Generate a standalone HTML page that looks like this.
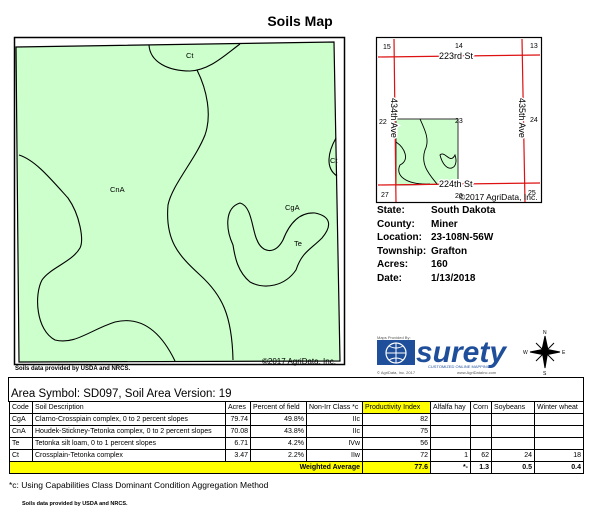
<!DOCTYPE html>
<html><head><meta charset="utf-8"><style>
body{margin:0;width:600px;height:513px;background:#fff;position:relative;font-family:"Liberation Sans",Arial,sans-serif;overflow:hidden}
.a{position:absolute;white-space:nowrap}
table{border-collapse:collapse;position:absolute;left:9px;top:401px;font-size:7px;font-family:"Liberation Sans",sans-serif;table-layout:fixed;width:574px}
td{border:1px solid #000;height:11px;padding:0 2px;line-height:11px;white-space:nowrap;overflow:hidden}
.r{text-align:right}
.y{background:#ffff00}
.i{font-weight:bold;font-size:10px}
</style></head><body>
<div class="a" style="left:0;width:600px;text-align:center;top:13px;font-size:14px;font-weight:bold">Soils Map</div>
<svg class="a" style="left:0;top:0" width="600" height="380">
<rect x="14.5" y="37.5" width="330" height="327" fill="#fff" stroke="#000" stroke-width="1.5"/>
<polygon points="16,47 334,42 340,361 19,362" fill="#ccffcc" stroke="#000" stroke-width="1.2"/>
<g fill="none" stroke="#000" stroke-width="1.1">
<path d="M149,45 C150,62 168,71 190,71 C210,70 225,55 240,44"/>
<path d="M197,70 C207,90 212,115 205,135 C195,160 172,185 168,205 C165,240 178,255 200,275 C222,295 232,315 233,360"/>
<path d="M19,155 C35,160 50,178 68,198 C80,215 84,240 80,248 C72,262 50,268 42,280 C34,295 36,330 55,340 C75,345 90,330 115,322 C140,316 160,330 175,361"/>
<path d="M336,138 C328,152 325,168 337,176"/>
<path d="M240,203 C252,206 252,230 257,240 C262,253 275,255 283,240 C290,222 300,212 315,213 C330,216 333,225 322,238 C310,250 302,252 296,270 C285,286 265,290 250,282 C238,272 235,258 233,245 C226,230 224,208 240,203 Z"/>
</g>
<g font-size="7.5" font-family="Liberation Sans,sans-serif">
<text x="186" y="58">Ct</text><text x="110" y="192">CnA</text><text x="285" y="210">CgA</text><text x="294" y="246">Te</text><text x="330" y="163">Ct</text>
<text x="262" y="364" font-size="8">©2017 AgriData, Inc.</text>
</g>
<rect x="376.5" y="37.5" width="165" height="165" fill="#fff" stroke="#000" stroke-width="1.2"/>
<polygon points="396,119 458,119 458,184 396,185" fill="#ccffcc" stroke="#333" stroke-width="1"/>
<g fill="none" stroke="#000" stroke-width="0.9">
<path d="M420,119 C425,130 430,140 425,150 C420,165 430,175 437,184"/>
<path d="M396,142 C405,148 410,160 400,165 C395,175 405,185 430,184"/>
<path d="M440,155 C445,150 450,165 455,155 C460,170 445,175 440,155Z"/>
</g>
<g stroke="#dd1111" stroke-width="1.2">
<line x1="378" y1="57" x2="540" y2="55"/><line x1="378" y1="185" x2="540" y2="183"/>
<line x1="394" y1="39" x2="396" y2="202"/><line x1="522" y1="39" x2="525" y2="202"/>
</g>
<g font-size="9" font-family="Liberation Sans,sans-serif">
<text x="383" y="49" font-size="7">15</text><text x="455" y="48" font-size="7">14</text><text x="530" y="48" font-size="7">13</text>
<text x="439" y="59" fill="#000" stroke="#fff" stroke-width="3" paint-order="stroke">223rd St</text>
<text x="439" y="187" stroke="#fff" stroke-width="3" paint-order="stroke">224th St</text>
<text x="379" y="124" font-size="7">22</text><text x="455" y="123" font-size="7">23</text><text x="530" y="122" font-size="7">24</text>
<text x="381" y="197" font-size="7">27</text><text x="455" y="198" font-size="7">26</text><text x="528" y="195" font-size="7">25</text>
<text transform="translate(391,98) rotate(90)" stroke="#fff" stroke-width="3" paint-order="stroke">434th Ave</text>
<text transform="translate(519,98) rotate(90)" stroke="#fff" stroke-width="3" paint-order="stroke">435th Ave</text>
<text x="459" y="200" font-size="8.5">©2017 AgriData, Inc.</text>
</g>
<text x="377" y="339" font-size="4" fill="#555">Maps Provided By:</text>
<rect x="377" y="340" width="38" height="25" fill="#1f4e9a"/>
<circle cx="396" cy="353" r="10" fill="none" stroke="#fff" stroke-width="1.2"/>
<path d="M386,353h20M396,343v20M389,346q7,4 14,0M389,360q7,-4 14,0" stroke="#fff" fill="none"/>
<text x="416" y="362" font-size="30" font-weight="bold" font-style="italic" fill="#1f4e9a" font-family="Liberation Sans,sans-serif">surety</text>
<text x="428" y="368" font-size="4" fill="#1f4e9a">CUSTOMIZED ONLINE MAPPING</text>
<text x="377" y="374" font-size="4" fill="#555">© AgriData, Inc. 2017</text><text x="457" y="374" font-size="4" fill="#555">www.AgriDataInc.com</text>
<g stroke="#000" fill="#000"><polygon points="545,336 548,350 545,368 542,350"/><polygon points="530,352 545,349 560,352 545,355"/><line x1="536" y1="343" x2="554" y2="361"/><line x1="554" y1="343" x2="536" y2="361"/></g>
<g font-size="5"><text x="543" y="334">N</text><text x="523" y="354">W</text><text x="562" y="354">E</text><text x="543" y="375">S</text></g>
</svg>
<div class="a" style="left:15px;top:366px;font-size:6px;font-weight:bold">Soils data provided by USDA and NRCS.</div>
<div class="a i" style="left:377px;top:205px">State:</div><div class="a i" style="left:431px;top:205px">South Dakota</div>
<div class="a i" style="left:377px;top:219px">County:</div><div class="a i" style="left:431px;top:219px">Miner</div>
<div class="a i" style="left:377px;top:232px">Location:</div><div class="a i" style="left:431px;top:232px">23-108N-56W</div>
<div class="a i" style="left:377px;top:246px">Township:</div><div class="a i" style="left:431px;top:246px">Grafton</div>
<div class="a i" style="left:377px;top:259px">Acres:</div><div class="a i" style="left:431px;top:259px">160</div>
<div class="a i" style="left:377px;top:273px">Date:</div><div class="a i" style="left:431px;top:273px">1/13/2018</div>
<div class="a" style="left:8px;top:377px;width:574px;height:24px;border:1px solid #000;border-bottom:none"></div>
<div class="a" style="left:11px;top:388px;font-size:11.5px">Area Symbol: SD097, Soil Area Version: 19</div>
<table>
<colgroup><col style="width:23px"><col style="width:193px"><col style="width:25px"><col style="width:56px"><col style="width:56px"><col style="width:68px"><col style="width:40px"><col style="width:21px"><col style="width:43px"><col style="width:49px"></colgroup>
<tr><td>Code</td><td>Soil Description</td><td>Acres</td><td>Percent of field</td><td>Non-Irr Class *c</td><td class="y">Productivity Index</td><td>Alfalfa hay</td><td>Corn</td><td>Soybeans</td><td>Winter wheat</td></tr>
<tr><td>CgA</td><td>Clarno-Crosspiain complex, 0 to 2 percent slopes</td><td class="r">79.74</td><td class="r">49.8%</td><td class="r">IIc</td><td class="r">82</td><td></td><td></td><td></td><td></td></tr>
<tr><td>CnA</td><td>Houdek-Stickney-Tetonka complex, 0 to 2 percent slopes</td><td class="r">70.08</td><td class="r">43.8%</td><td class="r">IIc</td><td class="r">75</td><td></td><td></td><td></td><td></td></tr>
<tr><td>Te</td><td>Tetonka silt loam, 0 to 1 percent slopes</td><td class="r">6.71</td><td class="r">4.2%</td><td class="r">IVw</td><td class="r">56</td><td></td><td></td><td></td><td></td></tr>
<tr><td>Ct</td><td>Crossplain-Tetonka complex</td><td class="r">3.47</td><td class="r">2.2%</td><td class="r">IIw</td><td class="r">72</td><td class="r">1</td><td class="r">62</td><td class="r">24</td><td class="r">18</td></tr>
<tr style="font-weight:bold"><td colspan="5" class="y r">Weighted Average</td><td class="y r">77.6</td><td class="r">*-</td><td class="r">1.3</td><td class="r">0.5</td><td class="r">0.4</td></tr>
</table>
<div class="a" style="left:9px;top:480px;font-size:8.5px">*c: Using Capabilities Class Dominant Condition Aggregation Method</div>
<div class="a" style="left:22px;top:501px;font-size:5.5px;font-weight:bold">Soils data provided by USDA and NRCS.</div>
</body></html>
